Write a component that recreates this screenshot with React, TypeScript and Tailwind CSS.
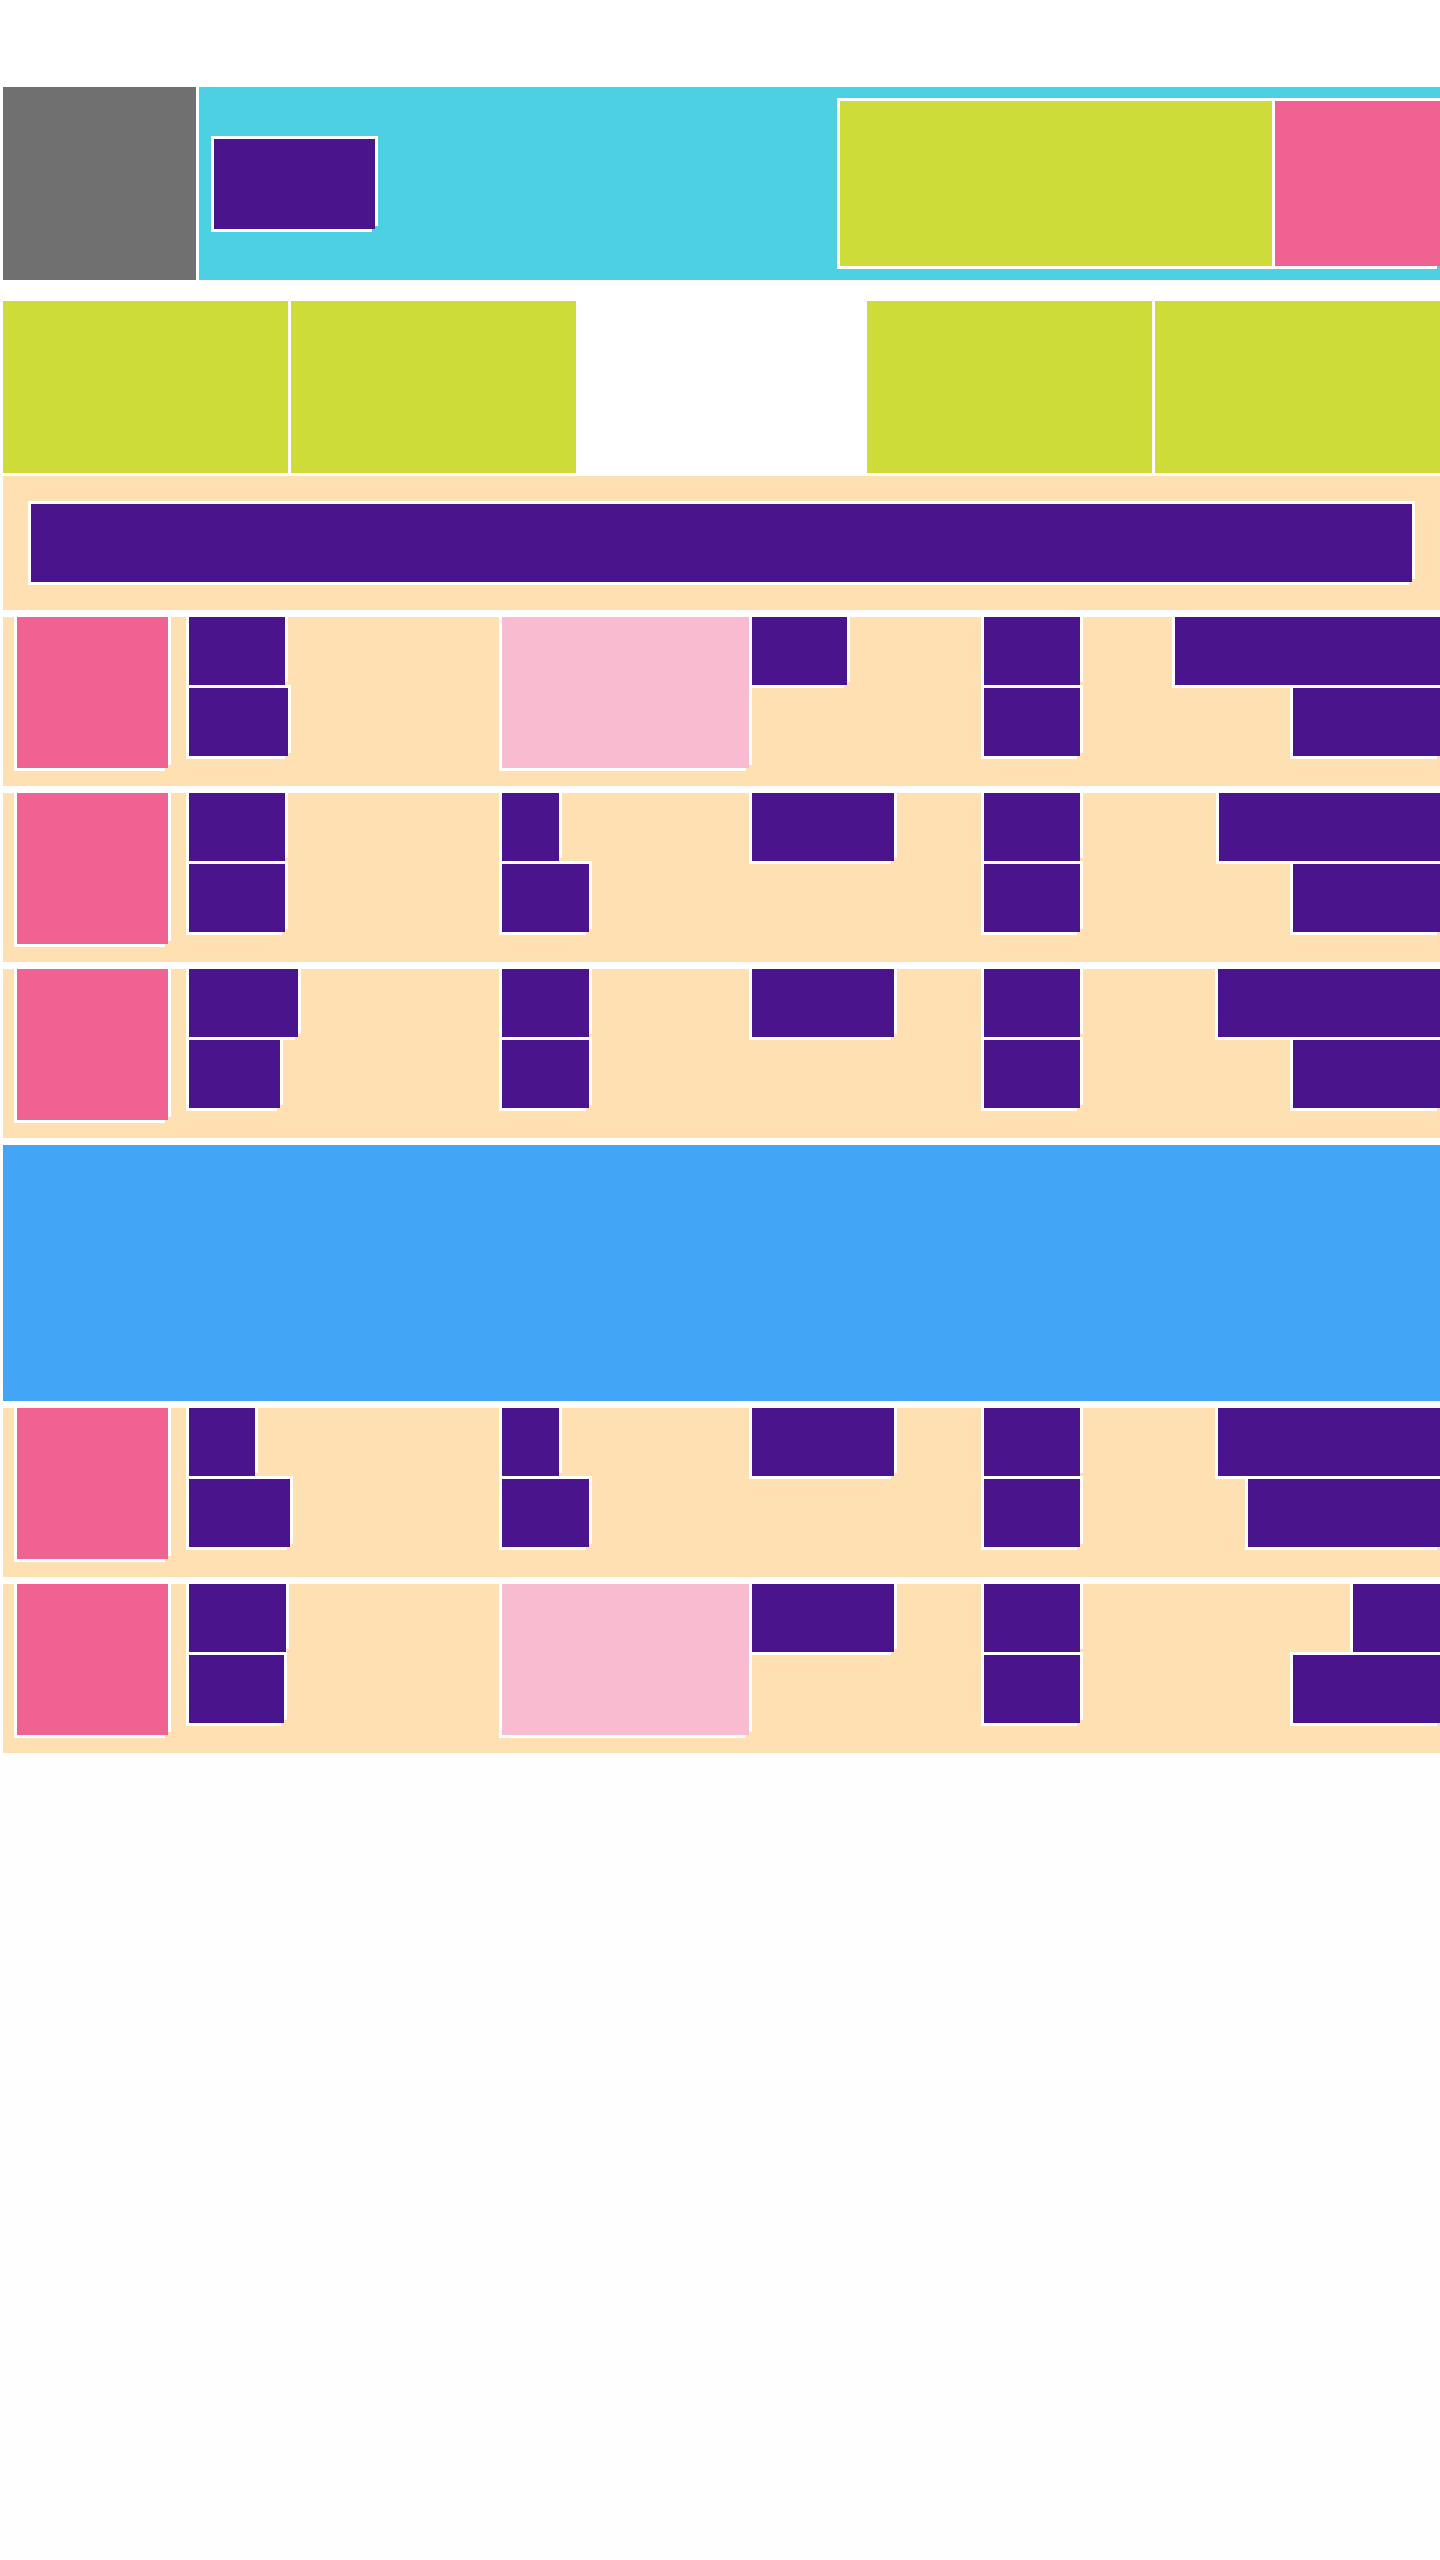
import React from 'react';

// white notch frame drawn round every block (top, left, right/bottom partial)
const frame = 'shadow-[-3px_-3px_0_0_#fff,3px_-3px_0_0_#fff,-3px_3px_0_0_#fff]';

type Row = {
  b: [number, number];
  c: 'image' | [number, number];
  d: number;
  f: [number, number];
};

const ROWS_TOP: Row[] = [
  { b: [96, 99], c: 'image', d: 95, f: [265, 147] },
  { b: [96, 96], c: [57, 87], d: 142, f: [221, 147] },
  { b: [109, 91], c: [87, 87], d: 142, f: [222, 147] },
];

const ROWS_BOTTOM: Row[] = [
  { b: [66, 101], c: [57, 87], d: 142, f: [222, 192] },
  { b: [97, 95], c: 'image', d: 142, f: [87, 147] },
];

function Line({ w }: { w: number }) {
  return <div className={`h-[68px] shrink-0 bg-[#4a148c] ${frame}`} style={{ width: w }} />;
}

function ListRow({ row }: { row: Row }) {
  return (
    <div className="ml-[3px] mt-[7px] flex h-[169px] bg-[#ffe0b2] pl-[14px]">
      {/* Thumbnail */}
      <div className={`h-[151px] w-[151px] shrink-0 bg-[#f06292] ${frame}`} />

      {/* Title + subtitle */}
      <div className="ml-[21px] flex w-[313px] shrink-0 flex-col gap-[3px]">
        <Line w={row.b[0]} />
        <Line w={row.b[1]} />
      </div>

      {/* Tags or preview */}
      <div className="flex w-[250px] shrink-0 flex-col gap-[3px]">
        {row.c === 'image' ? (
          <div className={`h-[151px] w-[247px] bg-[#f8bbd0] ${frame}`} />
        ) : (
          <>
            <Line w={row.c[0]} />
            <Line w={row.c[1]} />
          </>
        )}
      </div>

      {/* Status */}
      <div className="w-[232px] shrink-0">
        <Line w={row.d} />
      </div>

      {/* Meta */}
      <div className="flex w-[96px] shrink-0 flex-col gap-[3px]">
        <Line w={96} />
        <Line w={96} />
      </div>

      {/* Right aligned values */}
      <div className="flex flex-1 flex-col items-end gap-[3px]">
        <Line w={row.f[0]} />
        <Line w={row.f[1]} />
      </div>
    </div>
  );
}

export default function App() {
  return (
    <div className="min-h-[2560px] w-[1440px] overflow-hidden bg-[#fefefe]">
      <div className="bg-white pb-[2px] pt-[87px]">
        {/* Header */}
        <div className="flex h-[193px] pl-[3px]">
          <div className={`w-[193px] shrink-0 bg-[#707070] ${frame}`} />
          <div className={`ml-[3px] flex flex-1 items-center justify-between bg-[#4dd0e1] pl-[15px] ${frame}`}>
            <div className={`h-[90px] w-[161px] bg-[#4a148c] ${frame}`} />
            <div className={`flex h-[165px] w-[600px] ${frame}`}>
              <div className={`w-[432px] shrink-0 bg-[#cddc39] ${frame}`} />
              <div className={`ml-[3px] flex-1 bg-[#f06292] ${frame}`} />
            </div>
          </div>
        </div>

        {/* Feature tiles */}
        <div className="mt-[21px] grid h-[172px] grid-cols-5">
          <div className="pl-[3px]">
            <div className={`h-full bg-[#cddc39] ${frame}`} />
          </div>
          <div className="pl-[3px]">
            <div className={`h-full bg-[#cddc39] ${frame}`} />
          </div>
          <div />
          <div className="pl-[3px]">
            <div className={`h-full bg-[#cddc39] ${frame}`} />
          </div>
          <div className="pl-[3px]">
            <div className={`h-full bg-[#cddc39] ${frame}`} />
          </div>
        </div>

        {/* Search bar */}
        <div className={`ml-[3px] mt-[3px] h-[134px] bg-[#ffe0b2] p-[28px] ${frame}`}>
          <div className={`h-[78px] bg-[#4a148c] ${frame}`} />
        </div>

        {ROWS_TOP.map((row, i) => (
          <ListRow key={i} row={row} />
        ))}

        {/* Banner */}
        <div className={`ml-[3px] mt-[7px] h-[256px] bg-[#42a5f5] ${frame}`} />

        {ROWS_BOTTOM.map((row, i) => (
          <ListRow key={i} row={row} />
        ))}
      </div>
    </div>
  );
}
